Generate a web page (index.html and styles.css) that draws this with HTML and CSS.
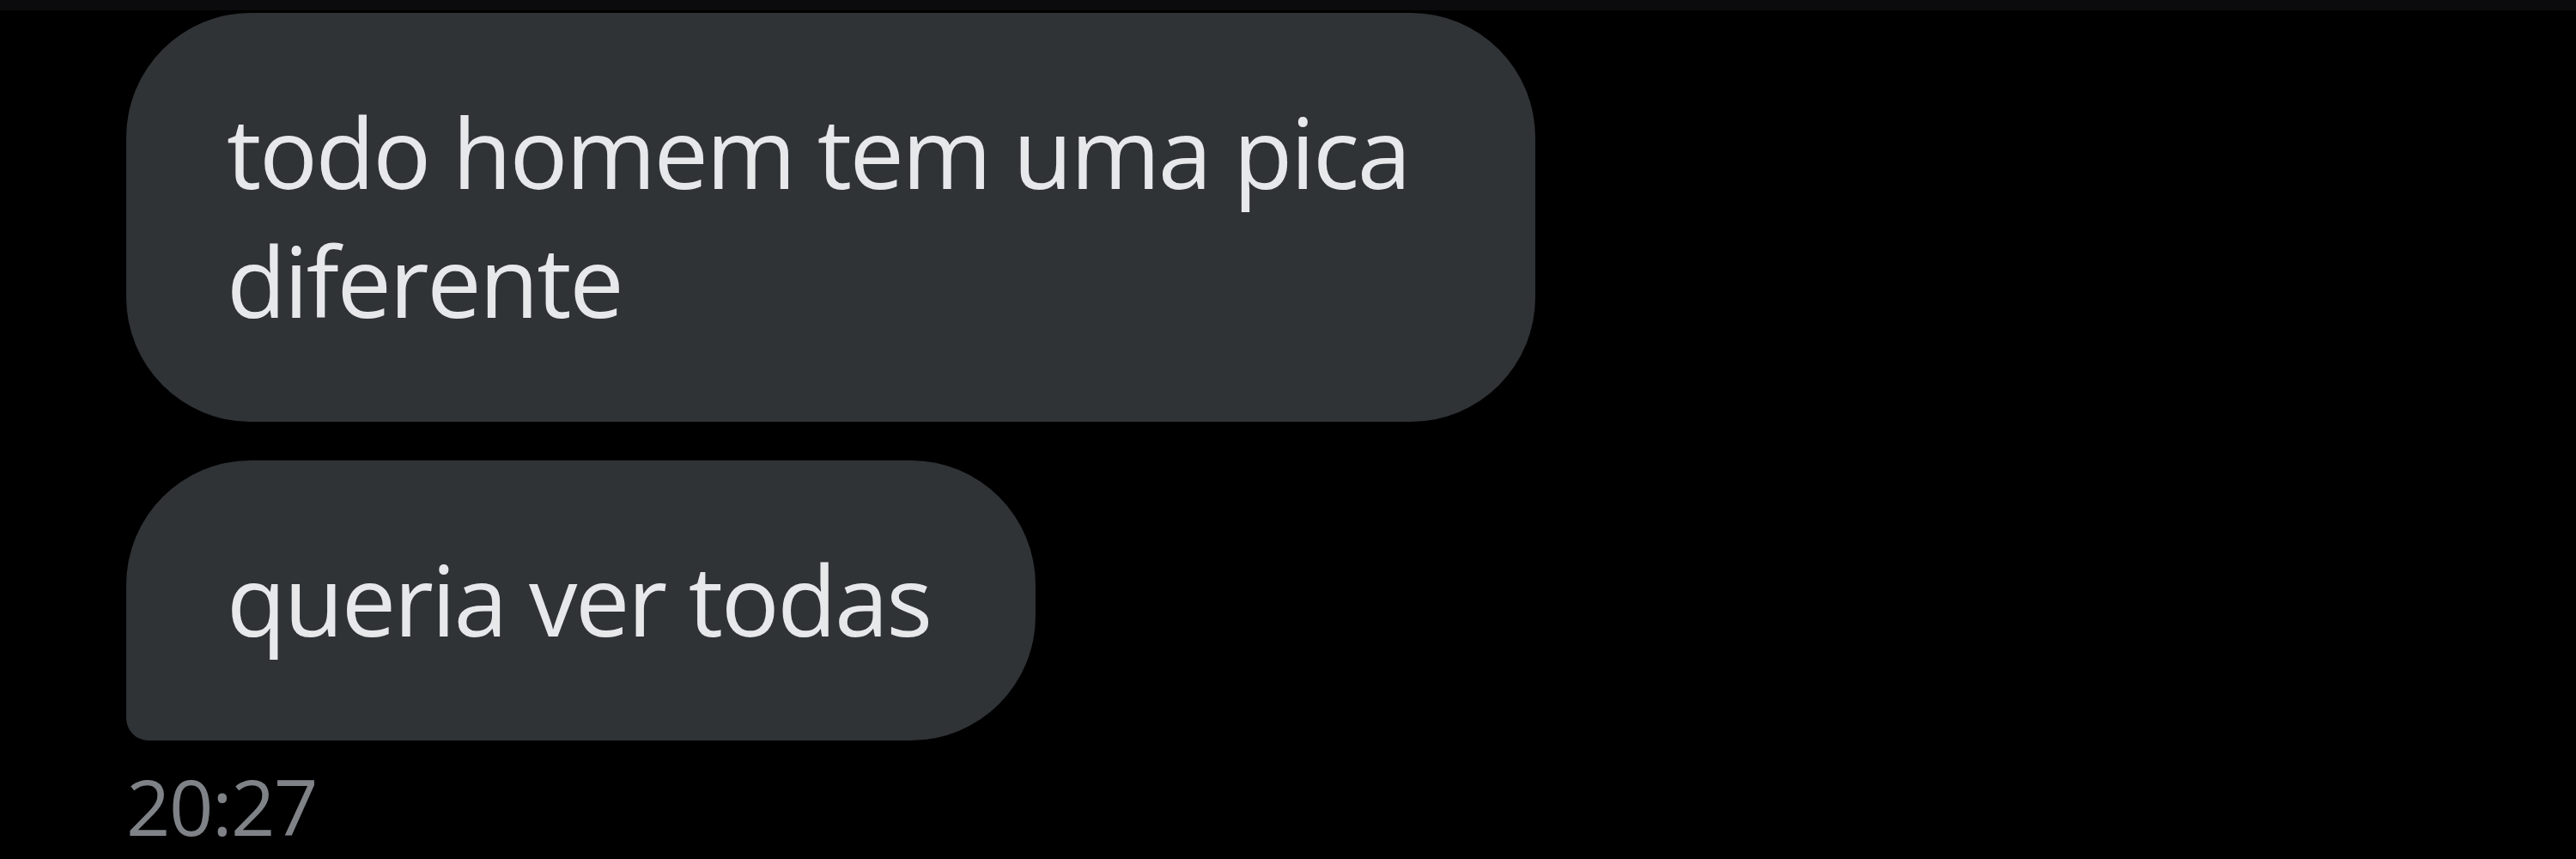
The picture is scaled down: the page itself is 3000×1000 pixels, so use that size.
FILE: index.html
```html
<!DOCTYPE html>
<html lang="pt">
<head>
<meta charset="utf-8">
<title>DM</title>
<link rel="stylesheet" href="styles.css">
</head>
<body>
<div class="topbar"></div>
<main class="thread">
  <div class="group">
    <div class="bubble bubble-first">todo homem tem uma pica diferente</div>
    <div class="bubble bubble-last">queria ver todas</div>
  </div>
  <div class="time">20:27</div>
</main>
</body>
</html>
```
FILE: styles.css
```css
html, body {
  margin: 0;
  padding: 0;
  background: #000;
  height: 1000px;
  overflow: hidden;
}
body {
  font-family: "Open Sans", "Noto Sans", sans-serif;
}
.topbar {
  height: 12px;
  background: #0b0b0e;
}
.thread {
  padding: 3px 0 0 147px;
  display: flex;
  flex-direction: column;
  align-items: flex-start;
}
.group {
  display: flex;
  flex-direction: column;
  align-items: flex-start;
  gap: 45px;
}
.bubble {
  box-sizing: border-box;
  background: #2f3336;
  color: #e7e8ea;
  font-size: 113px;
  line-height: 150px;
  letter-spacing: -2.4px;
  padding: 86px 122px 90px 117px;
  border-radius: 145px;
}
.bubble-first {
  width: 1641px;
}
.bubble-last {
  border-bottom-left-radius: 26px;
}
.time {
  margin-top: 16px;
  font-size: 90px;
  line-height: 120px;
  color: #7f8388;
  letter-spacing: -1.5px;
}
```
